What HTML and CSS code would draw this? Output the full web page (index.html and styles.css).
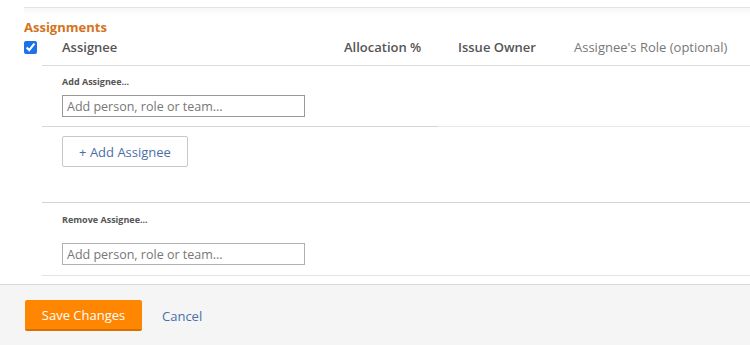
FILE: index.html
```html
<!DOCTYPE html>
<html>
<head>
    <title>Assignments</title>
    <link rel="stylesheet" href="styles.css">
</head>
<body>
    <!-- Assignments section -->
    <div class="assignments">
        <h2 class="section_title">Assignments</h2>
        <div class="table_head">
            <input type="checkbox" class="select_all" checked>
            <span class="col_assignee">Assignee</span>
            <span class="col_alloc">Allocation %</span>
            <span class="col_owner">Issue Owner</span>
            <span class="col_role">Assignee's Role (optional)</span>
        </div>

        <div class="row add_row">
            <div class="field_label">Add Assignee...</div>
            <input type="text" class="person_input" placeholder="Add person, role or team...">
        </div>

        <div class="row button_row">
            <button class="add_btn">+ Add Assignee</button>
        </div>

        <div class="row remove_row">
            <div class="field_label">Remove Assignee...</div>
            <input type="text" class="person_input" placeholder="Add person, role or team...">
        </div>
        <div class="row end_row"></div>
    </div>

    <!-- Footer with actions -->
    <div class="footer">
        <button class="save_btn">Save Changes</button>
        <a href="#" class="cancel_link">Cancel</a>
    </div>
</body>
</html>
```

FILE: styles.css
```css
* {box-sizing: border-box;}
body, html {margin: 0; padding: 0; background: #fff; font-family: "Open Sans", "Liberation Sans", sans-serif;}
body {width: 750px; height: 345px; overflow: hidden;}

.assignments {
    margin: 7px 0 0 24px;
    border-top: 1px solid #e2e2e2;
    background: linear-gradient(#f7f7f7, #fff 8px);
    height: 277px;
}
.section_title {
    margin: 0;
    padding-top: 10px;
    height: 30px;
    line-height: 18px;
    font-size: 13px;
    font-weight: 700;
    color: #d4731e;
}
.table_head {
    display: flex;
    align-items: center;
    height: 18px;
    margin-bottom: 9px;
    font-size: 13px;
    color: #555;
}
.select_all {
    margin: 0;
    width: 13px;
    height: 13px;
    accent-color: #1a73e8;
}
.col_assignee {font-weight: 600; margin-left: 25px; width: 282px;}
.col_alloc {font-weight: 600; width: 114px;}
.col_owner {font-weight: 600; width: 116px;}
.col_role {color: #777;}

.row {
    margin-left: 18px;
    border-top: 1px solid #dcdcdc;
    padding-left: 20px;
}
.add_row {height: 61px; padding-top: 10px;}
.button_row {
    height: 76px;
    padding-top: 9px;
    border-image: linear-gradient(to right, #d6d6d6 396px, #e8e8e8 396px) 1;
}
.remove_row {height: 73px; padding-top: 11px; border-top-color: #d2d2d2;}
.end_row {border-top-color: #e2e2e2; height: 1px;}

.field_label {
    font-size: 9px;
    font-weight: 700;
    color: #555;
    line-height: 12px;
    height: 19px;
}
.remove_row .field_label {height: 29px;}
.person_input {
    display: block;
    width: 243px;
    height: 22px;
    margin: 0;
    border: 1px solid #999;
    padding: 0 4px;
    font-family: inherit;
    font-size: 12.5px;
    color: #333;
    outline: none;
}
.remove_row .person_input {border-color: #b0b0b0;}
.person_input::placeholder {color: #777;}

.add_btn {
    width: 126px;
    height: 31px;
    background: #fff;
    border: 1px solid #c8c8c8;
    border-radius: 2px;
    font-family: inherit;
    font-size: 13px;
    color: #4a6fa8;
    cursor: pointer;
}

.footer {
    border-top: 1px solid #dadada;
    background: #f5f5f5;
    height: 61px;
    padding: 15px 0 0 25px;
    display: flex;
    align-items: flex-start;
}
.save_btn {
    width: 117px;
    height: 31px;
    background: #ff8600;
    border: none;
    border-bottom: 2px solid #d96f00;
    border-radius: 2px;
    font-family: inherit;
    font-size: 13px;
    color: #fff;
    cursor: pointer;
}
.cancel_link {
    margin-left: 20px;
    line-height: 32px;
    font-size: 13px;
    color: #4a6fa8;
    text-decoration: none;
}
```
